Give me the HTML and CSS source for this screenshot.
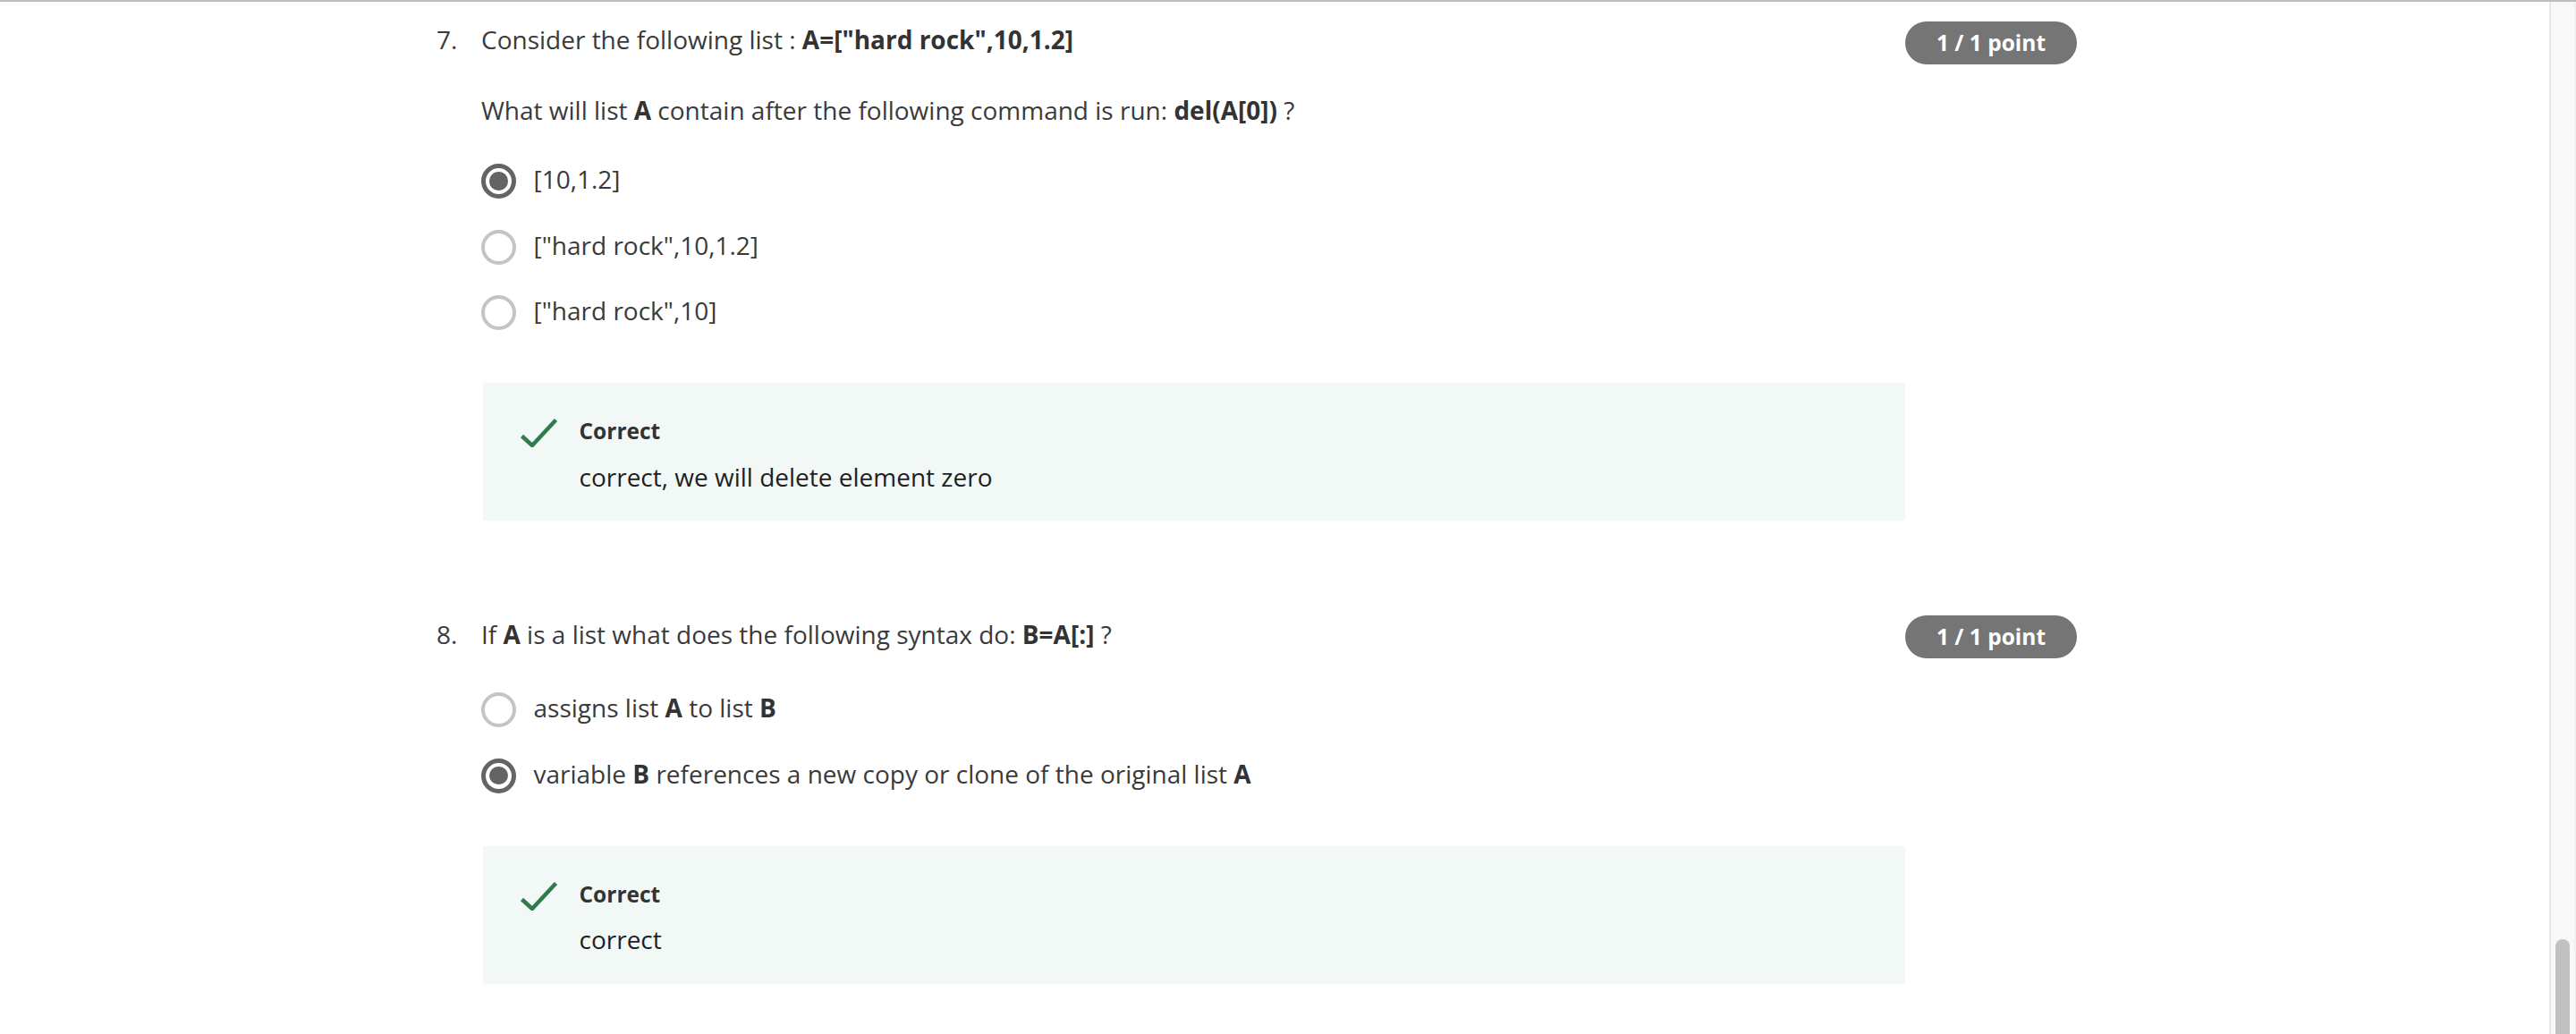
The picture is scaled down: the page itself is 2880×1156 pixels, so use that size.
FILE: index.html
```html
<!DOCTYPE html>
<html lang="en">
<head>
<meta charset="utf-8">
<title>Quiz</title>
<link rel="stylesheet" href="styles.css">
</head>
<body>
<div class="screen">
  <main class="content">
    <section class="question">
      <div class="qnum">7.</div>
      <div class="qbody">
        <p class="prompt">Consider the following list : <b>A=["hard rock",10,1.2]</b></p>
        <p class="prompt">What will list <b>A</b> contain after the following command is run: <b>del(A[0])</b> ?</p>
        <div class="options">
          <div class="option"><span class="radio checked"></span><span class="opt-text">[10,1.2]</span></div>
          <div class="option"><span class="radio"></span><span class="opt-text">["hard rock",10,1.2]</span></div>
          <div class="option"><span class="radio"></span><span class="opt-text">["hard rock",10]</span></div>
        </div>
        <div class="feedback">
          <svg class="check" width="44" height="34" viewBox="0 0 44 34"><path d="M3.5 21.5 L15 32 L41.5 3.5" fill="none" stroke="#2f7b50" stroke-width="4.5"/></svg>
          <div class="fb-text">
            <div class="fb-label">Correct</div>
            <div class="fb-msg">correct, we will delete element zero</div>
          </div>
        </div>
      </div>
      <div class="points"><span class="badge">1 / 1 point</span></div>
    </section>

    <section class="question q-next">
      <div class="qnum">8.</div>
      <div class="qbody">
        <p class="prompt">If <b>A</b> is a list what does the following syntax do: <b>B=A[:]</b> ?</p>
        <div class="options options-wide">
          <div class="option"><span class="radio"></span><span class="opt-text">assigns list <b>A</b> to list <b>B</b></span></div>
          <div class="option"><span class="radio checked"></span><span class="opt-text">variable <b>B</b> references a new copy or clone of the original list <b>A</b></span></div>
        </div>
        <div class="feedback">
          <svg class="check" width="44" height="34" viewBox="0 0 44 34"><path d="M3.5 21.5 L15 32 L41.5 3.5" fill="none" stroke="#2f7b50" stroke-width="4.5"/></svg>
          <div class="fb-text">
            <div class="fb-label">Correct</div>
            <div class="fb-msg">correct</div>
          </div>
        </div>
      </div>
      <div class="points points-flush"><span class="badge">1 / 1 point</span></div>
    </section>
  </main>
  <aside class="scrollbar"><div class="thumb"></div></aside>
</div>
</body>
</html>
```

FILE: styles.css
```css
html, body {
  margin: 0;
  padding: 0;
  background: #ffffff;
}

body {
  font-family: "Open Sans", "DejaVu Sans", sans-serif;
  color: #373737;
  overflow: hidden;
}

.screen {
  display: flex;
  height: 1156px;
  box-sizing: border-box;
  border-top: 2px solid #bdbdbd;
}

.content {
  flex: 1;
  padding-top: 20.5px;
  padding-left: 488px;
}

.question {
  display: grid;
  grid-template-columns: 50px 1592px 192px;
  align-items: start;
}

.q-next {
  margin-top: 106px;
}

.qnum {
  font-size: 28px;
  line-height: 42px;
  color: #3a3a3a;
}

.prompt {
  margin: 0;
  font-size: 28px;
  line-height: 42px;
  color: #3a3a3a;
}

.prompt b, .opt-text b {
  font-weight: 700;
  color: #333333;
}

.prompt + .prompt {
  margin-top: 37px;
}

.options {
  margin-top: 35.5px;
  display: flex;
  flex-direction: column;
  gap: 30.5px;
}

.options-wide {
  margin-top: 40px;
}

.option {
  display: flex;
  align-items: flex-start;
  gap: 19.5px;
  height: 43px;
}

.radio {
  width: 39px;
  height: 39px;
  margin-top: 4px;
  box-sizing: border-box;
  border-radius: 50%;
  border: 4.5px solid #c4c4c4;
  flex: none;
  display: flex;
  align-items: center;
  justify-content: center;
}

.radio.checked {
  border: 5.5px solid #646464;
}

.radio.checked::after {
  content: "";
  width: 20.5px;
  height: 20.5px;
  border-radius: 50%;
  background: #646464;
}

.opt-text {
  font-size: 28px;
  line-height: 42px;
  color: #3a3a3a;
}

.feedback {
  margin-top: 59px;
  margin-left: 2px;
  background: #f2f8f5;
  padding: 36px 40px 28.5px 40px;
  display: flex;
  align-items: flex-start;
  gap: 23.5px;
}

.check {
  flex: none;
  margin-top: 2px;
}

.fb-label {
  font-size: 24.5px;
  line-height: 36px;
  font-weight: 700;
  color: #333333;
}

.fb-msg {
  margin-top: 11.5px;
  font-size: 28px;
  line-height: 42px;
  color: #1f1f1f;
}

.points {
  display: flex;
  padding-top: 1.5px;
}

.points-flush {
  padding-top: 0;
}

.badge {
  width: 192px;
  height: 47.5px;
  border-radius: 24px;
  background: #757575;
  color: #ffffff;
  font-size: 24.5px;
  font-weight: 700;
  display: flex;
  align-items: center;
  justify-content: center;
}

.scrollbar {
  width: 30px;
  flex: none;
  box-sizing: border-box;
  background: #f8f8f8;
  border-left: 2px solid #e8e8e8;
  border-right: 2px solid #f0f0f0;
  display: flex;
  flex-direction: column;
  align-items: center;
}

.thumb {
  margin-top: auto;
  width: 16px;
  height: 106px;
  border-radius: 8px 8px 0 0;
  background: #c1c1c1;
}
```
